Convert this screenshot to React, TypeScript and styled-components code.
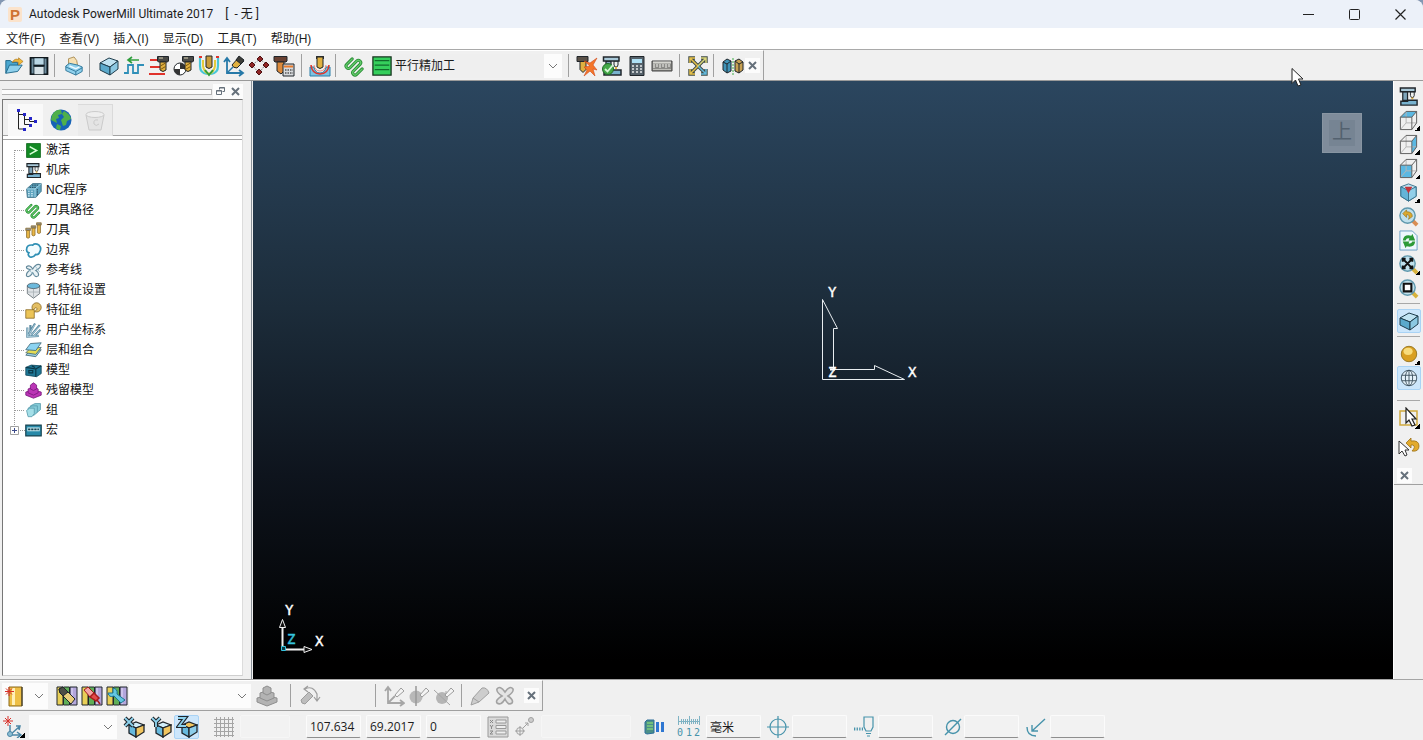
import React from "react";
import styled, { createGlobalStyle } from "styled-components";

const UI = '"Open Sans", "Noto Sans CJK SC", sans-serif';
const CJK = '"Liberation Sans", "Noto Sans CJK SC", sans-serif';

const GlobalStyle = createGlobalStyle`
  * { box-sizing: border-box; }
  body { margin: 0; background: #8397b3; font: 12px/16px ${CJK}; color: #1c1c1c; }
  button, input, select { font: inherit; color: inherit; }
  svg { display: block; flex: none; }
`;

/* ---------- frame ---------- */

const Page = styled.div`
  position: relative;
  display: flex;
  flex-direction: column;
  height: 100vh;
  min-height: 600px;
  background: #f0f0f0;
  border-radius: 8px 8px 0 0;
  overflow: hidden;
`;

const TitleBar = styled.header`
  display: flex;
  align-items: center;
  height: 28px;
  padding-left: 8px;
  background: #ecf1f9;
  font-family: Roboto, "Noto Sans CJK SC", sans-serif;
`;

const Logo = styled.span`
  width: 14px;
  margin-right: 7px;
  border-radius: 2px;
  background: #fbe3cc;
  color: #cf7433;
  font: bold 15px/15px "Liberation Sans", sans-serif;
  text-align: center;
`;

const Title = styled.h1`
  flex: 1;
  margin: 0;
  font-size: 12px;
  font-weight: 400;
  white-space: pre;
`;

const Doc = styled.span`
  margin-left: 12px;
`;

const WindowButton = styled.button`
  display: grid;
  place-items: center;
  width: 46px;
  height: 28px;
  padding: 0;
  border: 0;
  background: none;
`;

const MenuBar = styled.nav`
  display: flex;
  align-items: center;
  gap: 14px;
  height: 22px;
  padding-left: 6px;
  background: #fff;
  border-bottom: 1px solid #a9a9a9;
`;

const MenuItem = styled.button`
  padding: 0;
  border: 0;
  background: none;
  line-height: 20px;
  white-space: nowrap;
`;

const Strip = styled.div`
  display: flex;
  flex: none;
  height: 31px;
  background: #f0f0f0;
  border-bottom: 1px solid #9a9a9a;
`;

const BottomStrip = styled(Strip)`
  height: 32px;
  border-top: 1px solid #a5a5a5;
  border-bottom: 0;
`;

const ToolGroup = styled.div<{ $boxed?: boolean }>`
  display: flex;
  align-items: center;
  padding-left: 1px;
  padding-right: 3px;
  border-top: 1px solid #fff;
  border-right: 1px solid #a0a0a0;
  border-bottom: ${(p) => (p.$boxed ? "1px solid #a0a0a0" : "0")};
`;

const ToolButton = styled.button<{ $on?: boolean; $w?: number; $h?: number }>`
  position: relative;
  display: grid;
  place-items: center;
  flex: none;
  width: ${(p) => p.$w ?? 25}px;
  height: ${(p) => p.$h ?? 24}px;
  padding: 0;
  border: 1px solid ${(p) => (p.$on ? "#a9d3f5" : "transparent")};
  border-radius: 2px;
  background: ${(p) => (p.$on ? "#cce6fb" : "none")};
`;

const Flyout = styled.span`
  position: absolute;
  right: 0;
  bottom: 0;
  width: 5px;
  height: 5px;
  background: linear-gradient(135deg, transparent 50%, #000 50%);
`;

const Sep = styled.span<{ $wide?: boolean }>`
  flex: none;
  width: 1px;
  height: 23px;
  margin: ${(p) => (p.$wide ? "0 5px" : "0 6px 0 3px")};
  background: #a0a0a0;
`;

const Close = styled.button`
  display: grid;
  place-items: center;
  flex: none;
  width: 15px;
  height: 15px;
  padding: 0;
  border: 0;
  background: #fcfcfc;
`;

const Combo = styled.label<{ $w: number; $grey?: boolean }>`
  position: relative;
  display: flex;
  align-items: center;
  flex: none;
  width: ${(p) => p.$w}px;
  height: 24px;
  background: ${(p) => (p.$grey ? "#efefef" : "#fcfcfc")};

  select {
    appearance: none;
    width: 100%;
    height: 22px;
    padding: 0 20px 0 24px;
    border: 0;
    background: none;
  }
`;

const ComboIcon = styled.span`
  position: absolute;
  left: 1px;
  top: 2px;
  pointer-events: none;
`;

const Chevron = styled.span`
  position: absolute;
  right: 0;
  top: 0;
  display: grid;
  place-items: center;
  width: 18px;
  height: 24px;
  background: #fcfcfc;
  pointer-events: none;
`;

const StrategyCombo = styled(Combo)`
  margin: 0 1px 0 4px;
`;

/* ---------- middle ---------- */

const Middle = styled.div`
  display: flex;
  flex: 1;
  min-height: 0;
`;

const Explorer = styled.aside`
  display: flex;
  flex-direction: column;
  flex: none;
  width: 252px;
  padding: 3px 8px 3px 2px;
  border-right: 1px solid #8b9299;
`;

const Grip = styled.div`
  display: flex;
  align-items: center;
  height: 15px;
`;

const GripLines = styled.div`
  flex: 1;
  height: 6px;
  margin-right: 1px;
  border: solid #b4b4b4;
  border-width: 1px 1px 1px 0;
  background: #fcfcfc;
`;

const Panel = styled.div`
  display: flex;
  flex-direction: column;
  flex: 1;
  min-height: 0;
  border: 1px solid #777;
  border-right-color: #dcdcdc;
  border-bottom-color: #cfcfcf;
`;

const Tabs = styled.div`
  display: flex;
  align-items: flex-end;
  height: 40px;
  padding-left: 5px;
  padding-bottom: 3px;
  border-bottom: 1px solid #a4a4a4;
  background: linear-gradient(#f0f0f0 35px, #a4a4a4 35px, #a4a4a4 36px, #fff 36px);
`;

const Tab = styled.button<{ $active?: boolean; $dim?: boolean }>`
  display: grid;
  place-items: center;
  width: 35px;
  height: 32px;
  padding: 0;
  border: 0 solid #dadada;
  border-width: ${(p) => (p.$dim ? "1px 1px 0 0" : "0")};
  background: ${(p) => (p.$active ? "#f9f9f9" : p.$dim ? "#ebebeb" : "#f0f0f0")};
`;

const Tree = styled.ul`
  flex: 1;
  margin: 0;
  padding: 0 0 0 6px;
  background: #fff;
  list-style: none;
  overflow: hidden;
`;

const TreeRow = styled.li`
  display: flex;
  align-items: center;
  height: 20px;
`;

const TreeLabel = styled.span`
  margin-left: 4px;
  color: #111;
  white-space: nowrap;
`;

const Viewport = styled.main`
  position: relative;
  flex: 1;
  min-width: 0;
  margin-left: 1px;
  background: linear-gradient(#2b465f, #1c2c3a 38%, #0e141d 66%, #000 97%);
`;

const Origin = styled.svg`
  position: absolute;
  left: calc(50% - 5px);
  bottom: calc(50% - 5px);
`;

const Triad = styled.svg`
  position: absolute;
  left: 22px;
  bottom: 22px;
`;

const ViewCube = styled.button`
  position: absolute;
  top: 32px;
  right: 31px;
  display: grid;
  place-items: center;
  width: 40px;
  height: 40px;
  padding: 0;
  border: 1px solid #8895a2;
  background: #7f8c9b;

  span {
    width: 26px;
    height: 26px;
    background: #768493;
    color: #53616f;
    font: 20px/25px ${CJK};
  }
`;

const ViewBar = styled.aside`
  flex: none;
  width: 30px;
  border-left: 1px solid #fff;
`;

const ViewTools = styled.div`
  display: flex;
  flex-direction: column;
  align-items: center;
  padding: 3px 0 0 0;
  border-bottom: 1px solid #a0a0a0;
`;

const HSep = styled.span<{ $deep?: boolean }>`
  width: 23px;
  height: 1px;
  margin: ${(p) => (p.$deep ? "10px 0 5px" : "3px 0 5px")};
  background: #a8a8a8;
`;

const ViewClose = styled(Close)`
  margin: 9px 8px 1px 0;
`;

const ToolGap = styled.span`
  height: 5px;
`;

/* ---------- bottom ---------- */

const NewTool = styled.div`
  display: flex;
  align-items: center;
  width: 46px;
  height: 26px;
  margin: 0 6px 0 1px;
  background: #fcfcfc;
`;

const Blank = styled.span<{ $w: number }>`
  flex: none;
  width: ${(p) => p.$w}px;
`;

const StatusBar = styled.footer`
  display: flex;
  align-items: center;
  flex: none;
  height: 29px;
  padding: 2px 0 0 1px;
  font-family: ${UI};
`;

const Field = styled.input<{ $w?: number; $faint?: boolean }>`
  flex: none;
  width: ${(p) => p.$w ?? 55}px;
  height: 23px;
  margin-right: 5px;
  padding: 0 3px;
  border: 1px solid ${(p) => (p.$faint ? "#f6f6f6" : "#fbfbfb")};
  border-bottom-color: ${(p) => (p.$faint ? "#f6f6f6" : "#8e8e8e")};
  border-radius: 2px;
  background: #f2f2f2;
`;

const PointerMark = styled.svg`
  position: absolute;
  top: 67px;
  right: 118px;
`;

/* ---------- drawings, on a 22 x 22 grid ---------- */

const K = "#20262b";
const BLUE = "#2f8fb8";
const GOLD = "#e0b040";

const cutter = (
  <>
    <path d="M9.500 1.500h11V6l-1 1h-9l-1-1z" fill="#4a4a46" stroke={K} />
    <path d="M11 3h4" stroke="#d9d2b4" />
    <path d="M12 7h6v8q-3 3-6 0z" fill={GOLD} stroke={K} />
    <path d="M12.500 11l5-3M12.500 14.500l5-3" stroke="#7d5a10" />
  </>
);

const isoBox = (top: string, left: string, right: string) => (
  <>
    <path d="M6 9l7-3 8 3-8 3z" fill={top} stroke={K} strokeWidth="1.300" />
    <path d="M6 9l7 3v9l-7-4z" fill={left} stroke={K} strokeWidth="1.300" />
    <path d="M21 9l-8 3v9l8-5z" fill={right} stroke={K} strokeWidth="1.300" />
  </>
);

const library = (
  <>
    <path d="M1 2h6v18H1z" fill="#e8cf57" stroke={K} />
    <path d="M7.500 2h6v18h-6z" fill="#5fae57" stroke={K} />
    <path d="M14 2h7v18h-7z" fill="#b3a6dc" stroke={K} />
    <path d="M16 3v16" stroke="#e6e0fa" />
  </>
);

const wireCube = (face: string) => (
  <>
    <path d={face} fill="#5bb8e2" />
    <path d="M8.500 1.500v12h11M8.500 13.500l-6 7" fill="none" stroke="#b5b5b5" />
    <path d="M2.500 7.500h12v13h-12zM2.500 7.500l6-6h11l-5 6M19.500 1.500v12l-5 7" fill="none" stroke="#5c5c5c" />
  </>
);

const machine = (
  <>
    <path d="M5 6h5v9H5z" fill="#7fa5ba" stroke={K} strokeWidth="1.300" />
    <path d="M13 6h4v4l-1 2h-2l-1-2z" fill="#eef0ee" stroke={K} />
    <path d="M14 12h2v2h-2z" fill={GOLD} />
    <path d="M2.500 2h15.500v4H2.500z" fill="#a9c9d9" stroke={K} strokeWidth="1.500" />
    <path d="M3 16h7l1-1h9v5H3z" fill="#78b2cf" stroke={K} strokeWidth="1.500" />
  </>
);

const magnifier = (inner: React.ReactNode, handle = "#d7b23c") => (
  <>
    <path d="M15 15l5 5" stroke={handle} strokeWidth="4" />
    <circle cx="10" cy="10" r="8" fill="#bfe0ec" stroke="#5f98ad" strokeWidth="1.500" />
    {inner}
  </>
);

const snake = "M14 4H6.300a2.300 2.300 0 0 0 0 4.700h9.400a2.300 2.300 0 0 1 0 4.700H6.300a2.300 2.300 0 0 0 0 4.700H14";

const greyTool = <path d="M12 10l6-7 3 3-7 6z" fill="#f4f4f4" stroke="#9c9c9c" />;

const arms = "M11 11L3.500 3.500M3 8V3h5";

const art: Record<string, React.ReactNode> = {
  open: (
    <>
      <path d="M2 19V5h5l2 2h6v4" fill="#4aa6cf" stroke="#1c6488" />
      <path d="M2 19l4-9h14l-5 7z" fill="#8ed0ec" stroke="#1c6488" />
      <path d="M9 7q3-5 7-3V2l5 4-5 4V7q-3-2-7 0z" fill="#f0b93a" stroke="#a8741a" strokeWidth=".7" />
    </>
  ),
  save: (
    <>
      <path d="M1.500 2h19v18h-19z" fill="#3d5563" stroke="#10181d" strokeWidth="1.600" />
      <path d="M6 2.500h10v7H6z" fill="#b9d6e4" />
      <path d="M6 12h10v8H6z" fill="#d8e3e8" />
      <path d="M4 3v16M18 3v16" stroke="#7f9dad" />
      <path d="M5 10.500h12" stroke="#10181d" strokeWidth="2" />
    </>
  ),
  print: (
    <>
      <path d="M5 10V3l6-2 3 4 1 6z" fill="#f6e1b4" stroke="#a88b52" />
      <path d="M2 11l4-3 9 2 5 2v5l-7 4-11-5z" fill="#8fd0ec" stroke="#2b7396" />
      <path d="M2 12l11 5 7-4M13 17v4" fill="none" stroke="#2b7396" />
      <path d="M6 11l7 3 4-2" fill="none" stroke="#eefaff" strokeWidth="1.500" />
    </>
  ),
  block: (
    <>
      <path d="M2 8l9-5 9 3-8 6z" fill="#c0e3f2" stroke="#1f3c4b" />
      <path d="M2 8l10 4v8L2 15z" fill="#5ba9cb" stroke="#1f3c4b" />
      <path d="M12 12l8-6v8l-8 6z" fill="#8cc8e2" stroke="#1f3c4b" />
    </>
  ),
  rapid: (
    <>
      <path d="M1 18h4v-8h5v8h5v-8h6" fill="none" stroke={BLUE} strokeWidth="1.800" />
      <path d="M5 5h11M9 2L5 5l4 3" fill="none" stroke="#2f9e3c" strokeWidth="1.600" />
    </>
  ),
  feeds: (
    <>
      <path d="M2 5h8M2 12h10M1 19h16" stroke="#e0322b" strokeWidth="2" />
      {cutter}
    </>
  ),
  startpt: (
    <>
      <circle cx="7" cy="14" r="6" fill="#fff" stroke={K} />
      <path d="M7 14V8a6 6 0 0 1 6 6zM7 14v6a6 6 0 0 1-6-6z" fill="#333" />
      {cutter}
    </>
  ),
  leads: (
    <>
      <path d="M2 2v9q0 7 7 8M20 2v9q0 7-7 8" fill="none" stroke="#49c7d8" strokeWidth="2.200" />
      <path d="M5 5v6q1 6 6 8 5-2 6-8V5" fill="none" stroke="#e3cc3b" strokeWidth="2" />
      <path d="M1 2h3M18 2h3" stroke="#e0322b" strokeWidth="2" />
      <path d="M8 1h6v11q-3 3-6 0z" fill="#c99b39" stroke={K} />
      <path d="M7 15l4 5 4-5" fill="none" stroke="#2f9e3c" strokeWidth="2" />
    </>
  ),
  axis: (
    <>
      <path d="M4 4v14h15M1 7l3-4 3 4M16 15l4 3-4 3" fill="none" stroke="#2679a8" strokeWidth="1.800" />
      <path d="M4 18l6-6" stroke="#2679a8" strokeWidth="1.500" />
      <path d="M9 10l7-8 5 4-7 7q-4 0-5-3z" fill={GOLD} stroke={K} />
      <path d="M13 5l3-4 5 4-3 4z" fill="#3d3d38" stroke={K} />
    </>
  ),
  points: (
    <>
      <path d="M4 10l8-6 6 5-7 9z" fill="none" stroke="#888" strokeDasharray="2 1" />
      <g fill="#8f2525" stroke="#4c1010">
        <path d="M1 10l3-3 3 3-3 3zM9 4l3-3 3 3-3 3zM15 10l3-3 3 3-3 3zM8 17l3-3 3 3-3 3z" />
      </g>
    </>
  ),
  calcTool: (
    <>
      <path d="M1 1.500h13V6l-1 1H2L1 6z" fill="#6a4132" stroke={K} />
      <path d="M4 7h7v9l-3 3-4-3z" fill="#dd8a3b" stroke={K} />
      <path d="M10 9h11v12H10z" fill="#d7dadd" stroke={K} />
      <path d="M11 10.500h9v2h-9z" fill="#e87b2c" />
      <path d="M12 15h8M12 18h8" stroke="#555" strokeDasharray="1.500 1" strokeWidth="1.500" />
    </>
  ),
  collision: (
    <>
      <path d="M1 12h4q1 6 6 6t6-6h4v9H1z" fill="#7cc2e2" stroke="#2b7fa8" />
      <path d="M2 10q1 9 9 9t9-9" fill="none" stroke="#df352c" strokeWidth="1.600" />
      <path d="M5 10q1 6 6 6t6-6" fill="none" stroke="#f28c80" />
      <path d="M7 1h8v3H7z" fill="#333" />
      <path d="M8 2h6v10q-3 3-6 0z" fill={GOLD} stroke={K} />
    </>
  ),
  path: (
    <g transform="rotate(-45 11 11)" fill="none" strokeLinecap="round">
      <path d={snake} stroke="#23892f" strokeWidth="3" />
      <path d={snake} stroke="#62c96a" strokeWidth="1.400" />
    </g>
  ),
  raster: (
    <>
      <path d="M1 1h20v20H1z" fill="#35cf5c" stroke="#17351f" strokeWidth="1.400" />
      <path d="M3 5h16M3 10h16M3 15h16" stroke="#116b2c" strokeWidth="1.300" />
    </>
  ),
  burst: (
    <>
      <path d="M1 1.500h11v5H1z" fill="#5a5148" stroke={K} />
      <path d="M4 6.500h6v8l-3 3-3-3z" fill={GOLD} stroke={K} />
      <path d="M14 11L8 6l6 2 7-5-4 7 4 5-4-1 2 7-5-5-6 5 3-6-3-3z" fill="#f4762a" stroke="#d0481a" strokeWidth=".6" />
    </>
  ),
  verify: (
    <>
      {machine}
      <circle cx="7" cy="14" r="5.500" fill="#44a848" stroke="#216b28" />
      <path d="M4 14l2.500 2.500L12 10" fill="none" stroke="#d8f5d6" strokeWidth="1.800" />
    </>
  ),
  calc: (
    <>
      <path d="M4 1.500h14v19H4z" fill="#55616a" stroke={K} />
      <path d="M6 4h10v4H6z" fill="#aee0f4" />
      <path d="M6 11h10M6 14h10M6 17h10" stroke="#e6e9ea" strokeWidth="1.600" strokeDasharray="2 2" />
    </>
  ),
  ruler: (
    <>
      <path d="M1 6h20v10H1z" fill="#8b8b88" stroke="#444" />
      <path d="M2 7.500h18" stroke="#d5d5d0" strokeWidth="2" />
      <path d="M3 9v4M6 9v3M9 9v4M12 9v3M15 9v4M18 9v3" stroke="#f3f3ef" />
      <path d="M2 14.500h18" stroke="#bdbdb8" />
    </>
  ),
  expand: (
    <g fill="none">
      {[0, 90, 180, 270].map((a) => (
        <g key={a} transform={`rotate(${a} 11 11)`}>
          <path d={arms} stroke="#3f4a45" strokeWidth="3.400" />
        </g>
      ))}
      {[0, 90, 180, 270].map((a) => (
        <g key={a} transform={`rotate(${a} 11 11)`}>
          <path d={arms} stroke={a === 180 ? "#63b9dd" : a === 90 ? "#d9d57a" : "#e5c04a"} strokeWidth="1.500" />
        </g>
      ))}
    </g>
  ),
  mirror: (
    <>
      <path d="M1 7l4-3 4 2v10l-4 2-4-3z" fill="#3f93b8" stroke={K} />
      <path d="M1 7l4 2 4-3M5 9v9" fill="none" stroke={K} />
      <path d="M21 7l-4-3-4 2v10l4 2 4-3z" fill="#c7a052" stroke={K} />
      <path d="M21 7l-4 2-4-3M17 9v9" fill="none" stroke={K} />
      <path d="M11 3v17" stroke="#3cae44" strokeDasharray="2 1" />
    </>
  ),
  machine,
  topView: wireCube("M2.500 7.500l6-6h11l-5 6z"),
  rightView: wireCube("M14.500 7.500l5-6v12l-5 7z"),
  frontView: wireCube("M2.500 7.500h12v13h-12z"),
  isoView: (
    <>
      <path d="M3 5l8-3 8 3v10l-8 5-8-5z" fill="#bfe4f3" stroke="#39718c" />
      <path d="M3 5l8 4v11l-8-5z" fill="#64b4d8" stroke="#39718c" />
      <path d="M11 9l8-4v10l-8 5z" fill="#92cfe9" stroke="#39718c" />
      <path d="M7 5l4 7 4-7z" fill="#c3343a" />
    </>
  ),
  zoomPrev: magnifier(<path d="M5 8l4-4v2q6 0 6 5l-4 3q2-5-2-5v3z" fill="#dba92e" stroke="#96701a" strokeWidth=".7" />, "#d98d52"),
  refresh: (
    <>
      <path d="M2 1h13l5 5v15H2z" fill="#eef7fd" stroke="#6ba0c5" />
      <path d="M5 11q1-7 9-5l1-2 3 7h-7l1-2q-3-1-4 2zM18 12q-1 7-9 5l-1 2-3-7h7l-1 2q3 1 4-2z" fill="#2c9a37" />
    </>
  ),
  zoomAll: magnifier(
    <path d="M5 5l10 10M15 5L5 15M5 8V5h3M12 5h3v3M5 12v3h3M12 15h3v-3" stroke="#111" strokeWidth="2" fill="none" />
  ),
  zoomBox: magnifier(<path d="M6 6h8v8H6z" fill="#fff" stroke="#111" strokeWidth="2.200" />),
  sphere: (
    <>
      <circle cx="11" cy="11" r="8.500" fill="#d99f22" stroke="#94741f" />
      <ellipse cx="10" cy="8" rx="5" ry="4" fill="#f8dc7c" />
    </>
  ),
  globeWire: (
    <g fill="none" stroke="#3c4f5d">
      <circle cx="11" cy="11" r="8.500" fill="#e5f2fa" />
      <ellipse cx="11" cy="11" rx="4" ry="8.500" />
      <path d="M11 2.500v17M3 8h16M3 14h16" />
    </g>
  ),
  pick: (
    <>
      <path d="M2 4h17v14H2z" fill="none" stroke="#d0a93c" strokeWidth="1.500" />
      <path d="M8 1v15l3-3 3 6 3-1-3-6h4z" fill="#fff" stroke="#222" strokeWidth="1.200" />
    </>
  ),
  pickUndo: (
    <>
      <path d="M1 5v13l3-3 3 5 2-1-2-5h4z" fill="#fff" stroke="#333" />
      <path d="M8 7l5-5v3q8-1 8 5t-7 5q4-4 1-6h-2v3z" fill="#e2aa2c" stroke="#9c7117" strokeWidth=".8" />
    </>
  ),
  newTool: (
    <>
      <path d="M5 2h13v19H5z" fill="#eebf45" stroke="#8b6a1d" />
      <path d="M9.500 3v17" stroke="#fff0b8" strokeWidth="3" />
      <path d="M18 2v19" stroke={K} />
      <path d="M5 2v9M1 6.500h9M2 3.500l6 6M8 3.500l-6 6" stroke="#d8312a" />
    </>
  ),
  lib1: (
    <>
      {library}
      <path d="M3 4l4-2 12 12-4 5L4 8z" fill="#e9ce7c" stroke={K} />
      <path d="M3 4l4-2 5 5-5 4-3-3z" fill="#4d4d46" stroke={K} />
    </>
  ),
  lib2: (
    <>
      {library}
      <path d="M3 5l4-3 6 6-4 4z" fill="#f4a5a5" stroke="#a61b1b" />
      <path d="M9 12l4-4 5 5-3 3zM16 15l3 4" fill="#e34a4a" stroke="#a61b1b" strokeWidth="1.500" />
    </>
  ),
  lib3: (
    <>
      {library}
      <path d="M7 3v5H2q1 5 6 3l7 7 4-3-8-6q1-5-4-6z" fill="#63c6e0" stroke="#1d7391" />
    </>
  ),
  stackGrey: (
    <g fill="#b3b3b3" stroke="#8e8e8e">
      <path d="M1 13l9-2 11 2v4l-10 4-10-4z" />
      <path d="M4 8l6-2 8 2v5l-7 3-7-3z" />
      <path d="M7 3l4-2 4 2v5l-4 2-4-2z" />
    </g>
  ),
  rotateGrey: (
    <g stroke="#9d9d9d">
      <path d="M2 15l8-8 4 4-8 8q-4 0-4-4z" fill="#bdbdbd" />
      <path d="M6 4q8-4 12 5v6M15 12l3 4 3-4M9 1L5 4l4 3" fill="none" strokeWidth="1.200" />
    </g>
  ),
  axisGrey: (
    <>
      <path d="M5 3v15h15M2 6l3-4 3 4M17 15l4 3-4 3M5 18l7-7" fill="none" stroke="#a6a6a6" strokeWidth="1.800" />
      {greyTool}
    </>
  ),
  halfGrey: (
    <>
      <circle cx="8" cy="12" r="6.500" fill="#b8b8b8" />
      <path d="M8 1v20" stroke="#999" strokeWidth="1.500" />
      {greyTool}
    </>
  ),
  fullGrey: (
    <>
      <circle cx="9" cy="13" r="6" fill="#b5b5b5" />
      <path d="M1 5l16 15M13 6v5" stroke="#a5a5a5" />
      {greyTool}
    </>
  ),
  pencil: <path d="M2 20l2-7 9-10q5-1 7 5l-10 9zM4 13l6 4" fill="#cdcdcd" stroke="#a0a0a0" />,
  crossGrey: (
    <path
      d="M3 4q3-4 8 3 5-7 8-3 1 3-5 7 6 4 4 7-4 3-7-4-4 7-8 4-2-3 5-7-6-4-5-7z"
      fill="#e4e4e4"
      stroke="#a2a2a2"
      strokeWidth="1.600"
    />
  ),
  newPlane: (
    <>
      <path d="M7 9v10h10M7 19l9-8M14 16l4 3-4 3M13 10h4l-1 4" fill="none" stroke="#4c87a6" strokeWidth="1.500" />
      <circle cx="7" cy="18" r="2.500" fill="#8cbdd3" stroke="#4c87a6" />
      <path d="M5 0v10M0 5h10M2 2l6 6M8 2L2 8" stroke="#d8312a" />
    </>
  ),
  planeX: (
    <>
      {isoBox("#d2eefa", "#66b9de", "#f1c55f")}
      <path d="M2 2l8 8M10 2l-8 8" stroke={K} strokeWidth="4" />
      <path d="M2 2l8 8M10 2l-8 8" stroke="#8ed3ee" strokeWidth="1.800" />
    </>
  ),
  planeY: (
    <>
      {isoBox("#d2eefa", "#66b9de", "#f1c55f")}
      <path d="M2 2l4 4 4-4M6 6v5" stroke={K} strokeWidth="4" fill="none" />
      <path d="M2 2l4 4 4-4M6 6v5" stroke="#8ed3ee" strokeWidth="1.800" fill="none" />
    </>
  ),
  planeZ: (
    <>
      {isoBox("#f1c55f", "#66b9de", "#8ccdea")}
      <path d="M2 2h7l-6 8h7" stroke={K} strokeWidth="4" fill="none" />
      <path d="M2 2h7l-6 8h7" stroke="#8ed3ee" strokeWidth="1.800" fill="none" />
    </>
  ),
  grid: (
    <path
      d="M3.500 1v20M7.500 1v20M11.500 1v20M15.500 1v20M19.500 1v20M1 3.500h20M1 7.500h20M1 11.500h20M1 15.500h20M1 19.500h20"
      stroke="#a5a5a5"
    />
  ),
  xyzList: (
    <>
      <path d="M1 1h20v20H1z" fill="#d9d9d9" stroke="#9a9a9a" />
      <path d="M9 4h10v3H9zM9 9.500h10v3H9zM9 15h10v3H9z" fill="#eee" stroke="#999" />
      <path d="M3 4l3 3M6 4L3 7M3 9l1.500 2L6 9M4.500 11v2M3 15h3l-3 3h3" fill="none" stroke="#888" />
    </>
  ),
  link: (
    <g fill="none" stroke="#a0a0a0">
      <circle cx="6" cy="15" r="3.500" />
      <path d="M6 10v10M1 15h10M9 12l5-5M11 7h3v3" />
      <circle cx="17" cy="4" r="2.500" fill="#ccc" />
    </g>
  ),
  server: (
    <>
      <path d="M2 6l2-2h7v13l-7 1-2-1z" fill="#4b8f88" stroke="#2c6e9a" />
      <path d="M4 7h6M4 10h6M4 13h6" stroke="#7fd07a" strokeWidth="1.500" />
      <path d="M13 6h3v10h-3zM18 6h3v10h-3z" fill="#2f77d2" />
    </>
  ),
  target: (
    <g fill="none" stroke="#4793ab" strokeWidth="1.200">
      <circle cx="11" cy="11" r="8" />
      <path d="M11 0v22M0 11h22" />
    </g>
  ),
  toolTip: (
    <g fill="none" stroke="#4793ab" strokeWidth="1.200">
      <path d="M11 1h9v10l-2 4h-5l-2-4zM13 17.500h5M14 20h3" />
      <path d="M1 13h9" strokeDasharray="1.300 1.300" strokeWidth="3" />
    </g>
  ),
  diameter: (
    <g fill="none" stroke="#4793ab" strokeWidth="1.400">
      <circle cx="11" cy="11" r="6.500" />
      <path d="M3 19L19 3" />
    </g>
  ),
  radius: (
    <g fill="none" stroke="#4793ab" strokeWidth="1.400">
      <path d="M2 11q0 9 9 9M20 3L7 15M7 9v6h6" />
    </g>
  ),
  explorer: (
    <>
      <path d="M3.500 2v18h6M3.500 5.500h6v10h6M9.500 10.500h5v2h6" fill="none" stroke="#222" />
      <path d="M2 0h3v3H2zM8 4h3v3H8zM8 19h3v3H8zM14 8h3v3h-3zM14 15h3v3h-3zM19 11h3v3h-3z" fill="#2525c8" />
    </>
  ),
  globe: (
    <>
      <circle cx="11" cy="11" r="10.500" fill="#1763b6" />
      <path
        d="M2 6q4-6 9-5l1 4-4 1 1 3-3 1 1 4-4-2-2-1zM14 2q6 3 7 8l-4 2-1 4-3 1-2-6 3-3-2-3zM7 15l4 2-1 4q-3 0-4-2z"
        fill="#4fb04a"
      />
    </>
  ),
  bin: (
    <g fill="#e4e4e4" stroke="#cbcbcb">
      <path d="M2 5l3 15h12l3-15z" />
      <ellipse cx="11" cy="4.500" rx="9" ry="3" fill="#eee" />
      <path d="M14 10q-5-1-4 4 2 3 5 0" fill="none" />
    </g>
  ),
  activate: (
    <>
      <path d="M2 2h18v18H2z" fill="#128a24" stroke="#0c6419" />
      <path d="M6 6l9 5-9 5" fill="none" stroke="#d9ffd7" strokeWidth="2" />
    </>
  ),
  nc: (
    <>
      <path d="M2 9l8-7h11v10l-7 8H3z" fill="#5fa4bf" stroke="#376a80" />
      <path d="M2 9h11v11M13 9l8-7" fill="none" stroke="#b9e3f1" />
      <path d="M4 12h7M4 15h8M4 18h7" stroke="#d6f1fa" strokeWidth="1.500" strokeDasharray="2 2" />
      <path d="M6 7h8M9 4h9M16 9v8" stroke="#2c566a" strokeWidth="1.500" strokeDasharray="2 1" />
    </>
  ),
  tools: (
    <g stroke="#8a6c2c">
      <path d="M1 8h6v3H1zM8 5h6v3H8zM15 1h6v3h-6z" fill="#8d8d88" />
      <path d="M2 11h4v9l-2 1-2-1zM9 8h4v9l-2 1-2-1zM16 4h4v10l-2 1-2-1z" fill="#e8b646" />
    </g>
  ),
  boundary: (
    <path
      d="M2 10q0-7 8-6 3-3 8 0 4 4 1 9-1 4-5 3-4 5-8 3-3-2-1-5-3-1-3-4z"
      fill="#f2fbfe"
      stroke="#3090b5"
      strokeWidth="2.200"
    />
  ),
  pattern: (
    <>
      <path
        d="M2 6q4-3 8 3 5-8 10-5 1 3-6 7 5 3 3 7-4 3-7-4-5 7-8 4-1-4 5-8-6-1-5-4z"
        fill="#e9f2f5"
        stroke="#63889a"
        strokeWidth="1.500"
      />
      <path d="M13 5l6 8M4 9l9 9" stroke="#8eb5c6" />
    </>
  ),
  hole: (
    <>
      <path d="M3 5v10l8 6 8-6V5z" fill="#dfe3e6" stroke="#555f66" />
      <path d="M11 8v12M3 13h16" stroke="#a5adb2" />
      <ellipse cx="11" cy="5" rx="8" ry="3.500" fill="#6cb9dc" stroke="#445964" />
    </>
  ),
  featureGroup: (
    <g stroke="#866520">
      <circle cx="15" cy="7" r="6" fill="#e4bf64" />
      <path d="M9 12l5-5 2 2-5 5z" fill="#fff4cf" />
      <path d="M1 10h11v11H1z" fill="#ecc457" />
    </g>
  ),
  workplanes: (
    <g fill="none">
      <path d="M3 7v12l15-1M3 19L13 2M8 17L19 4M7 14L7 4M12 18l8-8" stroke="#5d8ba2" strokeWidth="2.800" />
      <path d="M3 8v11l15-1M3 19L13 3M8 17L19 5M12 18l7-7" stroke="#b9dbe8" />
    </g>
  ),
  levels: (
    <g stroke="#39606f">
      <path d="M1 17l6-6 14-1-7 9z" fill="#9ccfe2" />
      <path d="M1 14l6-6 14-1-7 9z" fill="#e5dc55" />
      <path d="M1 10l6-8 14-1-7 10z" fill="#8bd3f1" />
    </g>
  ),
  model: (
    <>
      <path d="M1 7l7-3 13 1v10l-6 4-14-2z" fill="#1f7795" stroke="#0e4458" />
      <path d="M1 7l13 2v10M14 9l7-4M5 11h5v3H5zM9 5l4 2" fill="none" stroke="#0b3747" strokeWidth="1.500" />
    </>
  ),
  stock: (
    <g fill="#bb35b6" stroke="#77177a">
      <path d="M1 13l9-3 11 3v4l-10 4-10-4z" />
      <path d="M4 9l7-3 6 3v5l-6 3-7-3z" />
      <path d="M7 4l4-3 4 3v5l-4 2-4-2z" />
    </g>
  ),
  group: (
    <g fill="#84cbd8" stroke="#5599aa">
      <path d="M7 5l6-3h7v8l-5 4H7z" />
      <path d="M4 8l5-3h7v8l-4 4H4z" />
      <path d="M2 11l4-3h6v7l-3 4H4z" fill="#a4dfe8" />
    </g>
  ),
  macro: (
    <>
      <path d="M1 4h20v14H1z" fill="#2789a8" stroke="#15414f" strokeWidth="1.500" />
      <path d="M3 7h16v5H3z" fill="#c5e9f0" />
      <path d="M4 9.500h14" stroke="#15414f" strokeWidth="2.500" strokeDasharray="3 1" />
    </>
  ),
};

const Icon = ({ name, size = 22 }: { name: string; size?: number }) => (
  <svg width={size} height={size} viewBox="0 0 22 22" fill="none" aria-hidden="true">
    {art[name]}
  </svg>
);

const Tool = ({ name, label, on, flyout, w, h, size }: {
  name: string; label: string; on?: boolean; flyout?: boolean; w?: number; h?: number; size?: number;
}) => (
  <ToolButton aria-label={label} $on={on} $w={w} $h={h}>
    <Icon name={name} size={size} />
    {flyout && <Flyout />}
  </ToolButton>
);

const Cross = () => (
  <svg width="9" height="9" viewBox="0 0 9 9" aria-hidden="true">
    <path d="M1 1l7 7M8 1L1 8" stroke="#66717b" strokeWidth="2" />
  </svg>
);

const Down = () => (
  <Chevron>
    <svg width="10" height="6" viewBox="0 0 10 6" aria-hidden="true">
      <path d="M1 1l4 4 4-4" fill="none" stroke="#777" />
    </svg>
  </Chevron>
);

/* Dotted connector to the left of a tree row; the last row carries an expander. */
const Branch = ({ first, last }: { first?: boolean; last?: boolean }) => (
  <svg width="16" height="20" viewBox="0 0 16 20" aria-hidden="true">
    <path d={`M5.500 ${first ? 10 : 0}V${last ? 6 : 20}`} stroke="#9a9a9a" strokeDasharray="1 1" />
    <path d={`M${last ? 11 : 6} 10.500h10`} stroke="#9a9a9a" strokeDasharray="1 1" />
    {last && (
      <>
        <path d="M1.500 6.500h8v8h-8z" fill="#fff" stroke="#a0a0a0" />
        <path d="M3 10.500h5M5.500 8v5" stroke="#3c4a8a" />
      </>
    )}
  </svg>
);

const menus = ["文件(F)", "查看(V)", "插入(I)", "显示(D)", "工具(T)", "帮助(H)"];

const tree: [string, string][] = [
  ["activate", "激活"],
  ["machine", "机床"],
  ["nc", "NC程序"],
  ["path", "刀具路径"],
  ["tools", "刀具"],
  ["boundary", "边界"],
  ["pattern", "参考线"],
  ["hole", "孔特征设置"],
  ["featureGroup", "特征组"],
  ["workplanes", "用户坐标系"],
  ["levels", "层和组合"],
  ["model", "模型"],
  ["stock", "残留模型"],
  ["group", "组"],
  ["macro", "宏"],
];

const setupTools: [string, string][] = [
  ["block", "毛坯"],
  ["rapid", "快进高度"],
  ["feeds", "进给和转速"],
  ["startpt", "开始点"],
  ["leads", "切入切出"],
  ["axis", "刀轴"],
  ["points", "点分布"],
  ["calcTool", "计算刀具"],
];

const viewTools: [string, string, boolean][] = [
  ["machine", "机床", false],
  ["topView", "顶视图", true],
  ["rightView", "右视图", true],
  ["frontView", "前视图", true],
  ["isoView", "等轴测", true],
  ["zoomPrev", "上一视图", false],
  ["refresh", "刷新", false],
  ["zoomAll", "全屏", true],
  ["zoomBox", "框选缩放", false],
];

const AxisLabels = styled.g`
  font: 14px "DejaVu Sans Mono", monospace;
  stroke-width: 0.4px;
`;

const ScaleDigits = styled.g`
  font: 10px "DejaVu Sans Mono", monospace;
  fill: #4793ab;
`;

export default function App() {
  return (
    <Page>
      <GlobalStyle />
      <TitleBar>
        <Logo>P</Logo>
        <Title>
          Autodesk PowerMill Ultimate 2017<Doc>[  - 无 ]</Doc>
        </Title>
        <WindowButton aria-label="最小化">
          <svg width="11" height="11"><path d="M0 5.500h11" stroke="#222" /></svg>
        </WindowButton>
        <WindowButton aria-label="最大化">
          <svg width="11" height="11">
            <path d="M1.500 .5h8q1 0 1 1v8q0 1-1 1h-8q-1 0-1-1v-8q0-1 1-1z" fill="none" stroke="#222" />
          </svg>
        </WindowButton>
        <WindowButton aria-label="关闭">
          <svg width="11" height="11"><path d="M.5 .5l10 10M10.500 .5l-10 10" stroke="#222" strokeWidth="1.200" /></svg>
        </WindowButton>
      </TitleBar>

      <MenuBar>
        {menus.map((m) => <MenuItem key={m}>{m}</MenuItem>)}
      </MenuBar>

      <Strip>
        <ToolGroup>
          <Tool name="open" label="打开" size={20} />
          <Tool name="save" label="保存" size={20} />
          <Sep />
          <Tool name="print" label="打印" size={20} />
          <Sep />
          {setupTools.map(([n, l]) => <Tool key={n} name={n} label={l} />)}
          <Sep $wide />
          <Tool name="collision" label="碰撞检查" />
          <Sep />
          <Tool name="path" label="刀具路径策略" />
          <StrategyCombo $w={191} $grey>
            <ComboIcon><Icon name="raster" size={20} /></ComboIcon>
            <select aria-label="策略"><option>平行精加工</option></select>
            <Down />
          </StrategyCombo>
          <Sep $wide />
          <Tool name="burst" label="碰撞" />
          <Tool name="verify" label="验证" />
          <Tool name="calc" label="计算器" />
          <Tool name="ruler" label="测量" />
          <Sep $wide />
          <Tool name="expand" label="变换" />
          <Sep />
          <Tool name="mirror" label="镜像" />
          <Close aria-label="关闭工具栏"><Cross /></Close>
        </ToolGroup>
      </Strip>

      <Middle>
        <Explorer>
          <Grip>
            <GripLines />
            <Close aria-label="浮动">
              <svg width="9" height="9">
                <path d="M3.500 2.500v-2h5v4h-2M.5 3.500h5v4h-5zM.5 4h5M3.500 1h5" fill="none" stroke="#66717b" />
              </svg>
            </Close>
            <Close aria-label="关闭面板"><Cross /></Close>
          </Grip>
          <Panel>
            <Tabs>
              <Tab $active aria-label="浏览器"><Icon name="explorer" /></Tab>
              <Tab aria-label="网页"><Icon name="globe" size={22} /></Tab>
              <Tab $dim aria-label="回收站"><Icon name="bin" /></Tab>
            </Tabs>
            <Tree>
              {tree.map(([n, l], i) => (
                <TreeRow key={l}>
                  <Branch first={i === 0} last={i === tree.length - 1} />
                  <Icon name={n} size={17} />
                  <TreeLabel>{l}</TreeLabel>
                </TreeRow>
              ))}
            </Tree>
          </Panel>
        </Explorer>

        <Viewport>
          <ViewCube aria-label="视图方块"><span>上</span></ViewCube>
          <Origin width="105" height="105" viewBox="0 0 105 105">
            <path d="M4.500 99.500V19.500l15 29h-4v41h41v-4l30 14z" fill="none" stroke="#e8edf0" />
            <path d="M12 89.500h5" stroke="#fff" strokeWidth="2" />
            <AxisLabels fill="#fff" stroke="#fff">
              <text x="10" y="17">Y</text>
              <text x="10" y="97">Z</text>
              <text x="90" y="97">X</text>
            </AxisLabels>
          </Origin>
          <Triad width="60" height="60" viewBox="0 0 60 60">
            <path d="M7.500 51V29M8 52.500h22" stroke="#f2f2f2" strokeWidth="2" />
            <path d="M7.500 22.500l-3 8h6zM37 52.500l-8-3v6z" fill="#111" stroke="#f2f2f2" />
            <path d="M6.500 49.500h4v4h-4z" fill="#0c3a45" stroke="#35c3de" />
            <AxisLabels fill="#fff" stroke="#fff">
              <text x="10" y="18">Y</text>
              <text x="12" y="47" fill="#35c3de" stroke="#35c3de">Z</text>
              <text x="40" y="49">X</text>
            </AxisLabels>
          </Triad>
        </Viewport>

        <ViewBar>
          <ViewTools>
            {viewTools.map(([n, l, f]) => (
              <Tool key={n} name={n} label={l} flyout={f} w={24} size={21} />
            ))}
            <HSep />
            <Tool name="block" label="显示毛坯" on w={24} />
            <HSep />
            <Tool name="sphere" label="阴影" flyout w={24} size={20} />
            <Tool name="globeWire" label="线框" on w={24} size={20} />
            <HSep $deep />
            <Tool name="pick" label="选取" flyout w={24} />
            <ToolGap />
            <Tool name="pickUndo" label="撤销选取" w={24} />
            <ViewClose aria-label="关闭工具栏"><Cross /></ViewClose>
          </ViewTools>
        </ViewBar>
      </Middle>

      <BottomStrip>
        <ToolGroup $boxed>
          <NewTool>
            <Tool name="newTool" label="新建刀具" />
            <Combo $w={21}><Down /></Combo>
          </NewTool>
          <Tool name="lib1" label="刀具库" />
          <Tool name="lib2" label="删除刀具" />
          <Tool name="lib3" label="编辑刀具" />
          <Combo $w={122}>
            <select aria-label="刀具" />
            <Down />
          </Combo>
          <Blank $w={3} />
          <Tool name="stackGrey" label="残留" />
          <Blank $w={8} />
          <Sep />
          <Tool name="rotateGrey" label="旋转" />
          <Blank $w={48} />
          <Sep $wide />
          <Tool name="axisGrey" label="编辑刀轴" />
          <Tool name="halfGrey" label="编辑点" />
          <Tool name="fullGrey" label="编辑曲面" />
          <Sep $wide />
          <Tool name="pencil" label="画笔" />
          <Tool name="crossGrey" label="清除" />
          <Blank $w={7} />
          <Close aria-label="关闭工具栏"><Cross /></Close>
        </ToolGroup>
      </BottomStrip>

      <StatusBar>
        <Tool name="newPlane" label="新建坐标系" flyout />
        <Blank $w={3} />
        <Combo $w={88}>
          <select aria-label="坐标系" />
          <Down />
        </Combo>
        <Blank $w={3} />
        <Tool name="planeX" label="X 平面" w={27} />
        <Tool name="planeY" label="Y 平面" w={27} />
        <Tool name="planeZ" label="Z 平面" on w={25} />
        <Blank $w={12} />
        <Tool name="grid" label="网格" />
        <Blank $w={4} />
        <Field aria-label="网格间距" $w={50} $faint />
        <Blank $w={11} />
        <Field aria-label="X" defaultValue="107.634" />
        <Field aria-label="Y" defaultValue="69.2017" />
        <Field aria-label="Z" defaultValue="0" />
        <Tool name="xyzList" label="坐标列表" w={23} />
        <Blank $w={3} />
        <Tool name="link" label="捕捉" />
        <Blank $w={4} />
        <Field aria-label="公差" $w={90} $faint />
        <Blank $w={5} />
        <Tool name="server" label="后台" />
        <Blank $w={11} />
        <svg width="25" height="22" viewBox="0 0 25 22" aria-hidden="true">
          <path
            d="M1.500 0v9M22.500 0v9M12.500 0v9M2 5.500h20M4.500 3v5M6.500 3v5M8.500 3v5M10.500 3v5M14.500 3v5M16.500 3v5M18.500 3v5M20.500 3v5"
            stroke="#7fb3c4"
          />
          <ScaleDigits>
            <text x="0" y="20">0</text>
            <text x="9" y="20">1</text>
            <text x="17" y="20">2</text>
          </ScaleDigits>
        </svg>
        <Blank $w={4} />
        <Field aria-label="单位" defaultValue="毫米" />
        <Tool name="target" label="公差" w={22} />
        <Blank $w={4} />
        <Field aria-label="公差值" />
        <Tool name="toolTip" label="刀具长度" w={22} />
        <Blank $w={4} />
        <Field aria-label="长度值" />
        <Blank $w={3} />
        <Tool name="diameter" label="直径" w={20} />
        <Blank $w={3} />
        <Field aria-label="直径值" />
        <Tool name="radius" label="刀尖半径" w={22} />
        <Blank $w={4} />
        <Field aria-label="半径值" />
      </StatusBar>

      <PointerMark width="14" height="21" viewBox="0 0 14 21" aria-hidden="true">
        <path d="M1 1.500v15l3.500-3.500 2.500 6 3-1-2.500-6H12z" fill="#fff" stroke="#222" />
      </PointerMark>
    </Page>
  );
}
